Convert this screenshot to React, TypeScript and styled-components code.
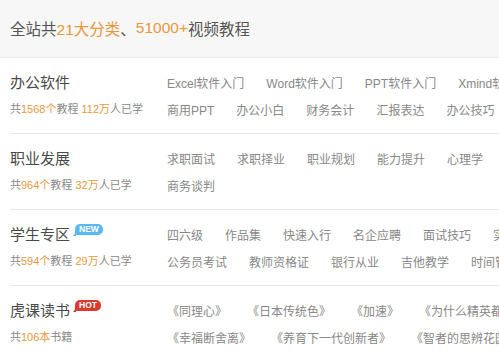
import styled, { createGlobalStyle } from 'styled-components';

const GlobalStyle = createGlobalStyle`
  html, body {
    margin: 0;
    padding: 0;
    background: #fff;
    overflow: hidden;
  }
  body {
    font-family: 'Liberation Sans', 'Noto Sans CJK SC', sans-serif;
  }
`;

const Page = styled.div`
  width: 499px;
  height: 352px;
  overflow: hidden;
  background: #fff;
`;

const Banner = styled.div`
  height: 56px;
  padding: 0 0 1px 10px;
  display: flex;
  align-items: center;
  background: #f7f7f7;
  border-bottom: 1px solid #ececec;
  font-size: 15.5px;
  color: #555;
  white-space: nowrap;
`;

const Hi = styled.span`
  color: #e9983d;
`;

const Section = styled.div`
  display: flex;
  margin-left: 10px;
  padding: 11px 0 10px;
  border-bottom: 1px solid #e8e8e8;
  &:last-child {
    border-bottom: none;
  }
`;

const Side = styled.div`
  width: 157px;
  flex-shrink: 0;
`;

const TitleRow = styled.div`
  display: flex;
  align-items: flex-start;
  height: 27px;
`;

const Title = styled.div`
  font-size: 15px;
  line-height: 27px;
  color: #4a4a4a;
  white-space: nowrap;
`;

const Badge = styled.span<{ $bg: string }>`
  position: relative;
  margin: 3px 0 0 5px;
  height: 11px;
  padding: 0 4px;
  border-radius: 5px 5px 5px 2px;
  background: ${(p) => p.$bg};
  color: #fff;
  font-size: 8.5px;
  font-weight: bold;
  line-height: 11px;
  &::before {
    content: '';
    position: absolute;
    left: -2px;
    bottom: -1px;
    border-style: solid;
    border-width: 4px 3px 0 0;
    border-color: transparent ${(p) => p.$bg} transparent transparent;
  }
`;

const Stats = styled.div`
  font-size: 11px;
  line-height: 27px;
  color: #888;
  white-space: nowrap;
`;

const Tags = styled.div`
  display: flex;
  flex-direction: column;
`;

const TagRow = styled.div<{ $gap: number }>`
  display: flex;
  gap: ${(p) => p.$gap}px;
  height: 27px;
  align-items: center;
  white-space: nowrap;
`;

const Tag = styled.span`
  font-size: 12px;
  color: #888;
`;

type Part = [string, boolean?];

type Group = {
  title: string;
  badge?: { text: string; bg: string };
  stats: Part[];
  rows: string[][];
  gap?: number;
};

const groups: Group[] = [
  {
    title: '办公软件',
    stats: [['共'], ['1568个', true], ['教程 '], ['112万', true], ['人已学']],
    rows: [
      ['Excel软件入门', 'Word软件入门', 'PPT软件入门', 'Xmind软件入门'],
      ['商用PPT', '办公小白', '财务会计', '汇报表达', '办公技巧'],
    ],
  },
  {
    title: '职业发展',
    stats: [['共'], ['964个', true], ['教程 '], ['32万', true], ['人已学']],
    rows: [['求职面试', '求职择业', '职业规划', '能力提升', '心理学'], ['商务谈判']],
  },
  {
    title: '学生专区',
    badge: { text: 'NEW', bg: '#5cb8f4' },
    stats: [['共'], ['594个', true], ['教程 '], ['29万', true], ['人已学']],
    rows: [
      ['四六级', '作品集', '快速入行', '名企应聘', '面试技巧', '实习兼职'],
      ['公务员考试', '教师资格证', '银行从业', '吉他教学', '时间管理'],
    ],
  },
  {
    title: '虎课读书',
    badge: { text: 'HOT', bg: '#dc3a2c' },
    stats: [['共'], ['106本', true], ['书籍']],
    rows: [
      ['《同理心》', '《日本传统色》', '《加速》', '《为什么精英都是时间控》'],
      ['《幸福断舍离》', '《养育下一代创新者》', '《智者的思辨花园》'],
    ],
    gap: 20,
  },
];

export default function App() {
  return (
    <Page>
      <GlobalStyle />
      <Banner>
        全站共<Hi>21大分类</Hi>、<Hi>51000+</Hi>视频教程
      </Banner>
      {groups.map((g) => (
        <Section key={g.title}>
          <Side>
            <TitleRow>
              <Title>{g.title}</Title>
              {g.badge && <Badge $bg={g.badge.bg}>{g.badge.text}</Badge>}
            </TitleRow>
            <Stats>
              {g.stats.map(([t, hi], i) => (hi ? <Hi key={i}>{t}</Hi> : <span key={i}>{t}</span>))}
            </Stats>
          </Side>
          <Tags>
            {g.rows.map((row, i) => (
              <TagRow key={i} $gap={g.gap ?? 22}>
                {row.map((t) => (
                  <Tag key={t}>{t}</Tag>
                ))}
              </TagRow>
            ))}
          </Tags>
        </Section>
      ))}
    </Page>
  );
}
